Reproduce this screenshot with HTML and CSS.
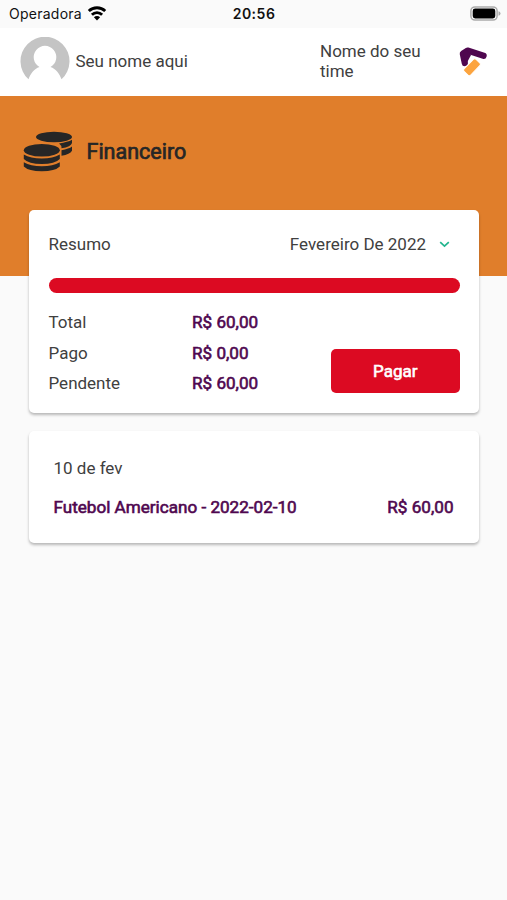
FILE: index.html
```html
<!DOCTYPE html>
<html lang="pt-BR">
<head>
<meta charset="utf-8">
<title>Financeiro</title>
<link rel="stylesheet" href="styles.css">
</head>
<body>
<div class="status">
  <div class="carrier"><span>Operadora</span>
    <svg class="wifi" width="20" height="15" viewBox="0 0 20 15"><g fill="none" stroke="#000" stroke-width="2.8"><path d="M1.800 5.100a11.700 11.700 0 0 1 16.400 0"/><path d="M4.900 8.800a7.200 7.200 0 0 1 10.200 0"/></g><path d="M6.900 11.300a4.400 4.400 0 0 1 6.200 0L10 14.500z"/></svg>
  </div>
  <span class="clock">20:56</span>
  <svg class="battery" width="31" height="15" viewBox="0 0 31 15"><rect x=".9" y=".9" width="26.2" height="13.2" rx="4" fill="#fff" stroke="#aaa" stroke-width="1.5"/><rect x="2.7" y="2.6" width="22.6" height="9.8" rx="2.4"/><path d="M28.500 5.200q2 .6 2 2.300t-2 2.300z" fill="#aaa"/></svg>
</div>
<header class="header">
  <svg class="avatar" width="50" height="50" viewBox="0 0 50 50"><path d="M8.500 42.300A24.500 24.500 0 1 1 41.500 42.300C39.500 36.500 36 32 30.500 30A11.300 11.300 0 1 0 19.500 30C14 32 10.500 36.500 8.500 42.300Z" fill="#c4c4c4"/></svg>
  <span class="user">Seu nome aqui</span>
  <span class="team">Nome do seu time</span>
  <svg class="logo" width="30" height="30" viewBox="0 0 30 30"><path d="M5.800 17L3.800 7.500 8.500 4.500 24.600 9.700" fill="none" stroke="#4f074f" stroke-width="6.200" stroke-linecap="round" stroke-linejoin="round"/><path d="M4 7L8 4 12 9 7 18.500Z" fill="#4f074f"/><rect x="4.500" y="16.700" width="17" height="9" rx="2" transform="rotate(-46 13 21.200)" fill="#fca43f" stroke="#fff" stroke-width="1"/></svg>
</header>
<section class="banner">
  <svg class="coins" width="50" height="42" viewBox="0 0 50 42" fill="#262626"><ellipse cx="31" cy="6" rx="18" ry="5.200"/><path d="M36 12.400Q45 11.200 49 8.800V12Q48 16 38.500 17.200Q38.500 14 36 12.400Z"/><path d="M38.500 19.200Q46 18 49 15.600V19.800Q47 23.500 38.500 24.700Z"/><ellipse cx="18.800" cy="19.200" rx="18" ry="6.300"/><path d="M.8 23.500Q7.500 27.500 18.800 27.500T36.800 23.500V28Q32 33 18.800 33T.8 28Z"/><path d="M.8 31.200Q7.500 35.200 18.800 35.200T36.800 31.200V35.500Q32 40.300 18.800 40.300T.8 35.500Z"/></svg>
  <h1>Financeiro</h1>
</section>
<main class="content">
  <section class="card summary">
    <div class="top"><span>Resumo</span><span class="month">Fevereiro De 2022 <svg width="11" height="7" viewBox="0 0 11 7"><path d="M1.200 1.200l4.300 4 4.300-4" fill="none" stroke="#22b58e" stroke-width="1.700"/></svg></span></div>
    <div class="progress"></div>
    <div class="bottom">
      <dl class="totals"><dt>Total</dt><dd>R$ 60,00</dd><dt>Pago</dt><dd>R$ 0,00</dd><dt>Pendente</dt><dd>R$ 60,00</dd></dl>
      <button class="pay">Pagar</button>
    </div>
  </section>
  <section class="card entry">
    <div class="date">10 de fev</div>
    <div class="line"><span>Futebol Americano - 2022-02-10</span><span>R$ 60,00</span></div>
  </section>
</main>
</body>
</html>
```

FILE: styles.css
```css
* { box-sizing: border-box; }
body { margin: 0; min-height: 900px; background: #fafafa; color: #404040; font: 17px/20px Roboto, sans-serif; }
svg { display: block; flex: none; }
.status { height: 28px; display: grid; grid-template-columns: 1fr auto 1fr; align-items: center; padding: 0 6px 1px 9px; color: #111; font: 14px/20px Inter, sans-serif; }
.carrier { display: flex; align-items: center; gap: 5px; letter-spacing: .25px; }
.clock { font-weight: 600; letter-spacing: .5px; margin-left: -2px; }
.battery { justify-self: end; }
.header { height: 68px; background: #fff; display: flex; align-items: center; padding: 0 18px 2px 20px; }
.avatar { margin-top: 1px; }
.user { margin: 0 auto 1px 5.5px; }
.team { width: 121px; margin: 0 18px 0 0; }
.banner { height: 180px; background: #e07e2b; display: flex; align-items: flex-start; padding: 35px 23px; gap: 13.5px; }
h1 { margin: 6px 0 0; font-size: 21.5px; line-height: 30px; font-weight: 400; color: #262626; -webkit-text-stroke: .7px; }
.content { padding: 0 28px 0 29px; margin-top: -66px; display: grid; gap: 18px; }
.card { background: #fff; border-radius: 5px; box-shadow: 0 2px 3px rgba(0,0,0,.27); }
.summary { height: 203px; padding: 24px 19.5px 0; }
.top { display: flex; justify-content: space-between; }
.month { display: flex; align-items: center; gap: 13px; padding-right: 9.5px; }
.progress { height: 15px; margin-top: 24px; border-radius: 8px; background: #dc0a22; }
.bottom { display: flex; justify-content: space-between; }
.totals { margin: 14px 0 0; display: grid; grid-template-columns: 143.5px auto; grid-auto-rows: 30.5px; line-height: 31px; }
dd { margin: 0; }
dd, .line { color: #4f074f; font-size: 17.1px; -webkit-text-stroke: .6px; }
.pay { width: 128.5px; height: 44px; margin-top: 56px; padding: 0 0 1px; border: 0; border-radius: 5px; background: #dc0a22; color: #fff; font: inherit; -webkit-text-stroke: .6px; }
.entry { height: 112px; padding: 27px 25.5px 0 24.5px; }
.line { display: flex; justify-content: space-between; margin-top: 19px; }
```
